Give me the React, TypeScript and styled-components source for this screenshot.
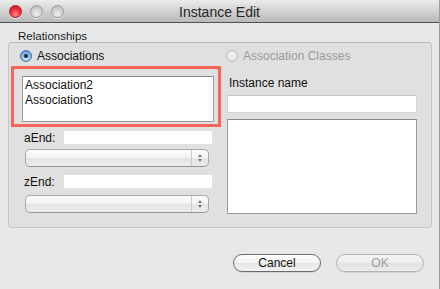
import styled, { createGlobalStyle } from "styled-components";

const GlobalStyle = createGlobalStyle`
  html, body {
    margin: 0;
    padding: 0;
    background: #e8e8e8;
  }
  body {
    font-family: "Liberation Sans", Arial, sans-serif;
    font-size: 12px;
    color: #111;
  }
`;

const Window = styled.div`
  width: 440px;
  height: 289px;
  box-sizing: border-box;
  border-right: 1px solid #9e9e9e;
  background: #e8e8e8;
  display: flex;
  flex-direction: column;
  overflow: hidden;
`;

const TitleBar = styled.div`
  height: 22px;
  flex: none;
  display: grid;
  grid-template-columns: 1fr auto 1fr;
  align-items: center;
  background: linear-gradient(#ececec, #d2d2d2 50%, #b9b9b9);
  border-top: 1px solid #f4f4f4;
  border-bottom: 1px solid #515151;
  box-sizing: content-box;
  margin-top: -1px;
`;

const Lights = styled.div`
  display: flex;
  gap: 8px;
  padding-left: 9px;
  padding-top: 1px;
`;

const Light = styled.span<{ $red?: boolean }>`
  width: 13px;
  height: 13px;
  box-sizing: border-box;
  border-radius: 50%;
  border: 1px solid ${(p) => (p.$red ? "#a3202a" : "#9c9c9c")};
  background: ${(p) =>
    p.$red
      ? "radial-gradient(circle at 50% 75%, #ff8f8f 0%, #f2343e 45%, #c3111c 100%)"
      : "radial-gradient(circle at 50% 75%, #eeeeee 0%, #d2d2d2 50%, #b2b2b2 100%)"};
  box-shadow: 0 1px 0 rgba(255, 255, 255, 0.6);
`;

const Title = styled.div`
  font-size: 14px;
  color: #262626;
  padding-top: 1px;
`;

const Body = styled.div`
  flex: 1;
  display: flex;
  flex-direction: column;
  padding: 0 7px 0 8px;
`;

const SectionLabel = styled.div`
  font-size: 11.5px;
  line-height: 14px;
  margin: 6px 0 0 10px;
  height: 13px;
  color: #1c1c1c;
`;

const Group = styled.div`
  height: 186px;
  box-sizing: border-box;
  border: 1px solid #c3c3c3;
  border-top-color: #b5b5b5;
  border-radius: 4px;
  background: #e0e0e0;
  display: grid;
  grid-template-columns: 210px 190px;
  grid-template-rows: auto 1fr;
  column-gap: 6px;
  padding: 7px 14px 0 2px;
`;

const RadioRow = styled.label<{ $disabled?: boolean; $shift?: number }>`
  display: flex;
  align-items: center;
  gap: 5px;
  height: 12px;
  margin-left: ${(p) => p.$shift ?? 0}px;
  color: ${(p) => (p.$disabled ? "#9a9a9a" : "#111")};
  font-size: 12px;
`;

const Radio = styled.span<{ $checked?: boolean; $disabled?: boolean }>`
  width: 12px;
  height: 12px;
  box-sizing: border-box;
  border-radius: 50%;
  flex: none;
  display: flex;
  align-items: center;
  justify-content: center;
  border: 1px solid ${(p) => (p.$checked ? "#4b6f9a" : "#b4b4b4")};
  background: ${(p) =>
    p.$checked
      ? "radial-gradient(circle at 50% 70%, #d6ecff 0%, #7db4ea 55%, #3f7ec4 100%)"
      : "linear-gradient(#f4f4f4, #e4e4e4)"};

  &::after {
    content: "";
    display: ${(p) => (p.$checked ? "block" : "none")};
    width: 4px;
    height: 4px;
    border-radius: 50%;
    background: #1a2230;
  }
`;

const Column = styled.div`
  display: flex;
  flex-direction: column;
`;

const Highlight = styled.div`
  margin-top: 4px;
  border: 3px solid #f7655a;
  padding: 7px 4px 2px 8px;
`;

const ListBox = styled.div<{ $height: number }>`
  height: ${(p) => p.$height}px;
  box-sizing: border-box;
  background: #fff;
  border: 1px solid #9b9b9b;
  border-top-color: #8a8a8a;
  padding: 1px 2px;
  font-size: 12px;
  line-height: 15px;
`;

const FieldRow = styled.div<{ $top: number }>`
  display: flex;
  align-items: center;
  margin-top: ${(p) => p.$top}px;
  padding-left: 13px;
  height: 13px;
`;

const FieldLabel = styled.span`
  width: 40px;
  font-size: 12px;
`;

const PlainField = styled.div`
  width: 148px;
  height: 13px;
  background: #fff;
`;

const Combo = styled.div<{ $top: number }>`
  margin: ${(p) => p.$top}px 0 0 14px;
  width: 184px;
  height: 18px;
  box-sizing: border-box;
  border: 1px solid #a8a8a8;
  border-bottom-color: #949494;
  border-radius: 5px;
  background: linear-gradient(#fdfdfd, #f1f1f1 50%, #e4e4e4 51%, #ececec);
  display: flex;
  justify-content: flex-end;
`;

const ComboArrows = styled.div`
  width: 16px;
  border-left: 1px solid #cbcbcb;
  display: flex;
  flex-direction: column;
  align-items: center;
  justify-content: center;
  gap: 2px;
`;

const Arrow = styled.span<{ $down?: boolean }>`
  width: 0;
  height: 0;
  border-left: 2.5px solid transparent;
  border-right: 2.5px solid transparent;
  ${(p) =>
    p.$down
      ? "border-top: 3px solid #7a7a7a;"
      : "border-bottom: 3px solid #7a7a7a;"}
`;

const RightLabel = styled.div`
  margin: 14px 0 0 2px;
  font-size: 12px;
  line-height: 14px;
`;

const TextInput = styled.div`
  margin-top: 5px;
  height: 18px;
  box-sizing: border-box;
  background: #fff;
  border: 1px solid #d6d6d6;
  border-top-color: #c6c6c6;
`;

const BigBox = styled(ListBox)`
  margin-top: 6px;
`;

const Footer = styled.div`
  display: flex;
  justify-content: flex-end;
  gap: 15px;
  margin-top: 26px;
  padding-right: 8px;
`;

const Button = styled.button<{ $disabled?: boolean }>`
  width: 88px;
  height: 18px;
  border-radius: 9px;
  font-family: "Liberation Sans", Arial, sans-serif;
  font-size: 12px;
  line-height: 14px;
  padding: 0;
  color: ${(p) => (p.$disabled ? "#9c9c9c" : "#111")};
  border: 1px solid ${(p) => (p.$disabled ? "#b3b3b3" : "#6a6a6a")};
  background: ${(p) =>
    p.$disabled
      ? "linear-gradient(#f4f4f4, #ebebeb 50%, #e2e2e2 51%, #ebebeb)"
      : "linear-gradient(#ffffff, #f3f3f3 50%, #e6e6e6 51%, #f2f2f2)"};
  box-shadow: 0 1px 0 rgba(0, 0, 0, 0.08);
`;

const ComboBox = ({ top }: { top: number }) => (
  <Combo $top={top}>
    <ComboArrows>
      <Arrow />
      <Arrow $down />
    </ComboArrows>
  </Combo>
);

const App = () => (
  <>
    <GlobalStyle />
    <Window>
      <TitleBar>
        <Lights>
          <Light $red />
          <Light />
          <Light />
        </Lights>
        <Title>Instance Edit</Title>
        <div />
      </TitleBar>
      <Body>
        <SectionLabel>Relationships</SectionLabel>
        <Group>
          <RadioRow $shift={9}>
            <Radio $checked />
            Associations
          </RadioRow>
          <RadioRow $disabled $shift={-1}>
            <Radio $disabled />
            Association Classes
          </RadioRow>
          <Column>
            <Highlight>
              <ListBox $height={46}>
                <div>Association2</div>
                <div>Association3</div>
              </ListBox>
            </Highlight>
            <FieldRow $top={4}>
              <FieldLabel>aEnd:</FieldLabel>
              <PlainField />
            </FieldRow>
            <ComboBox top={5} />
            <FieldRow $top={8}>
              <FieldLabel>zEnd:</FieldLabel>
              <PlainField />
            </FieldRow>
            <ComboBox top={7} />
          </Column>
          <Column>
            <RightLabel>Instance name</RightLabel>
            <TextInput />
            <BigBox $height={95} />
          </Column>
        </Group>
        <Footer>
          <Button>Cancel</Button>
          <Button $disabled>OK</Button>
        </Footer>
      </Body>
    </Window>
  </>
);

export default App;
